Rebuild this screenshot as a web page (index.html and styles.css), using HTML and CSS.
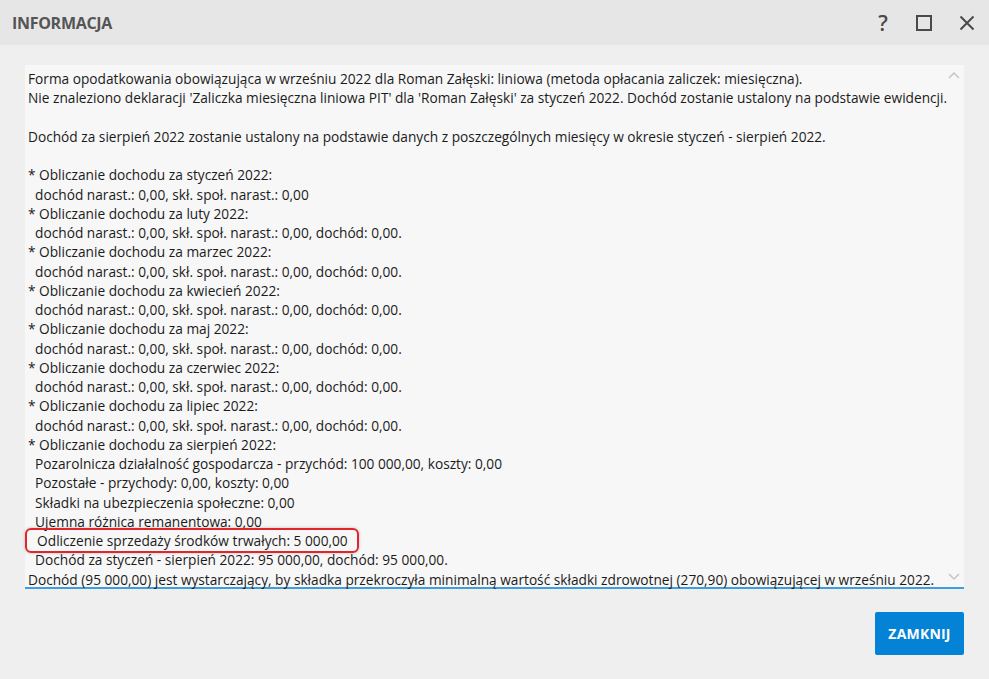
FILE: index.html
```html
<!DOCTYPE html>
<html lang="pl">
<head>
    <meta charset="UTF-8">
    <title>Informacja</title>
    <link rel="stylesheet" href="styles.css">
</head>
<body>
    <div class="dialog">
        <header class="titlebar">
            <div class="title">INFORMACJA</div>
            <div class="controls">
                <span class="ctl ctl-help">?</span>
                <span class="ctl ctl-max"><span class="maximize"></span></span>
                <span class="ctl ctl-close">
                    <svg width="16" height="16" viewBox="0 0 16 16"><path d="M1.5 1.5 L14.5 14.5 M14.5 1.5 L1.5 14.5" stroke="#4a4a4a" stroke-width="2" fill="none"/></svg>
                </span>
            </div>
        </header>

        <main class="content">
            <div class="memo">
                <div class="memo-text">Forma opodatkowania obowiązująca w wrześniu 2022 dla Roman Załęski: liniowa (metoda opłacania zaliczek: miesięczna).
Nie znaleziono deklaracji 'Zaliczka miesięczna liniowa PIT' dla 'Roman Załęski' za styczeń 2022. Dochód zostanie ustalony na podstawie ewidencji.

Dochód za sierpień 2022 zostanie ustalony na podstawie danych z poszczególnych miesięcy w okresie styczeń - sierpień 2022.

* Obliczanie dochodu za styczeń 2022:
  dochód narast.: 0,00, skł. społ. narast.: 0,00
* Obliczanie dochodu za luty 2022:
  dochód narast.: 0,00, skł. społ. narast.: 0,00, dochód: 0,00.
* Obliczanie dochodu za marzec 2022:
  dochód narast.: 0,00, skł. społ. narast.: 0,00, dochód: 0,00.
* Obliczanie dochodu za kwiecień 2022:
  dochód narast.: 0,00, skł. społ. narast.: 0,00, dochód: 0,00.
* Obliczanie dochodu za maj 2022:
  dochód narast.: 0,00, skł. społ. narast.: 0,00, dochód: 0,00.
* Obliczanie dochodu za czerwiec 2022:
  dochód narast.: 0,00, skł. społ. narast.: 0,00, dochód: 0,00.
* Obliczanie dochodu za lipiec 2022:
  dochód narast.: 0,00, skł. społ. narast.: 0,00, dochód: 0,00.
* Obliczanie dochodu za sierpień 2022:
  Pozarolnicza działalność gospodarcza - przychód: 100 000,00, koszty: 0,00
  Pozostałe - przychody: 0,00, koszty: 0,00
  Składki na ubezpieczenia społeczne: 0,00
  Ujemna różnica remanentowa: 0,00
<span class="highlight">  Odliczenie sprzedaży środków trwałych: 5 000,00 </span>
  Dochód za styczeń - sierpień 2022: 95 000,00, dochód: 95 000,00.
Dochód (95 000,00) jest wystarczający, by składka przekroczyła minimalną wartość składki zdrowotnej (270,90) obowiązującej w wrześniu 2022.</div>
                <div class="scroll">
                    <svg width="12" height="8" viewBox="0 0 12 8"><path d="M1 7 L6 2 L11 7" stroke="#c4c4c4" stroke-width="1.5" fill="none"/></svg>
                    <svg width="12" height="8" viewBox="0 0 12 8"><path d="M1 1 L6 6 L11 1" stroke="#c4c4c4" stroke-width="1.5" fill="none"/></svg>
                </div>
            </div>
        </main>

        <footer class="buttons">
            <button class="btn">ZAMKNIJ</button>
        </footer>
    </div>
</body>
</html>
```

FILE: styles.css
```css
* {
    margin: 0;
    padding: 0;
    box-sizing: border-box;
}

body {
    font-family: "Open Sans", "Noto Sans", sans-serif;
    background: #efefef;
    color: #1b1b1b;
    width: 989px;
    height: 679px;
    overflow: hidden;
}

.titlebar {
    height: 45px;
    background: #e6e6e6;
    display: flex;
    align-items: center;
    justify-content: space-between;
    padding: 0 13px 0 12px;
}

.title {
    font-size: 16px;
    font-weight: 700;
    color: #555;
    letter-spacing: -0.3px;
}

.controls {
    display: flex;
    align-items: center;
}

.ctl {
    width: 18px;
    height: 18px;
    display: flex;
    align-items: center;
    justify-content: center;
    color: #4a4a4a;
}

.ctl-help {
    font-size: 21px;
    font-weight: 600;
}

.ctl-max {
    margin-left: 23px;
}

.ctl-close {
    margin-left: 25px;
}

.maximize {
    width: 16px;
    height: 16px;
    border: 2px solid #4a4a4a;
}

.content {
    padding: 20px 25px 0 25px;
}

.memo {
    position: relative;
    height: 524px;
    background: #f7f7f7;
    border-bottom: 2px solid #3d9fdc;
}

.memo-text {
    white-space: pre;
    font-size: 13.7px;
    line-height: 19.25px;
    padding: 4px 0 0 3px;
}

.highlight {
    border: 2px solid #e0262b;
    border-radius: 6px;
    padding: 1px 6px 1px 3px;
    margin-left: -3px;
    box-shadow: 0 0 3px rgba(0, 0, 0, 0.25);
}

.scroll {
    position: absolute;
    top: 6px;
    right: 4px;
    bottom: 6px;
    display: flex;
    flex-direction: column;
    justify-content: space-between;
}

.buttons {
    display: flex;
    justify-content: flex-end;
    padding: 23px 25px 0 0;
}

.btn {
    font-family: "Open Sans", sans-serif;
    background: #0483d6;
    color: #fff;
    font-size: 14px;
    font-weight: 700;
    letter-spacing: 0.2px;
    border: none;
    border-radius: 2px;
    width: 89px;
    height: 43px;
    cursor: pointer;
}
```
